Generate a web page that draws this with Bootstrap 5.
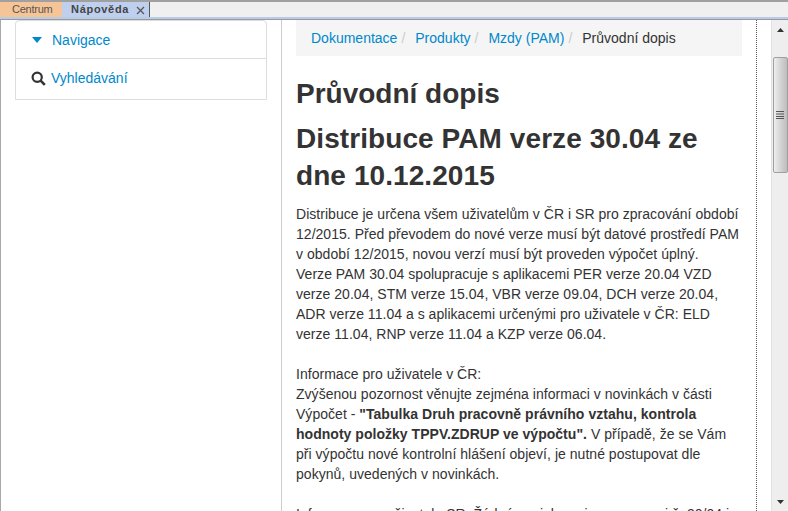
<!DOCTYPE html>
<html lang="cs">
<head>
<meta charset="UTF-8" />
<title>Nápověda</title>
<link href="https://cdn.jsdelivr.net/npm/bootstrap@5.3.0/dist/css/bootstrap.min.css" rel="stylesheet" />
<style>
  html, body { height: 511px; overflow: hidden; background: #fff; }
  body { font-family: "Liberation Sans", Arial, sans-serif; font-size: 14px; line-height: 20px; color: #333; }
  a { color: #0088cc; text-decoration: none; }

  .app-shell { height: 511px; display: flex; flex-direction: column; }
  .tabbar { height: 20px; flex: none; display: flex; align-items: stretch; background: #f0f0f0; border-top: 2px solid #a0a0a0; border-bottom: 1px solid #9a9a9a; box-shadow: inset 0 -2px 0 #b8cbe8; }
  .tab-item { height: 15px; font-size: 11px; line-height: 15px; color: #555; }
  .tab-center { width: 62px; background: #f6c597; padding-left: 12px; letter-spacing: -.25px; }
  .tab-help { width: 88px; background: #bfd0ef; font-weight: 700; letter-spacing: .7px; padding-left: 9px; color: #444; display: flex; justify-content: space-between; border-right: 1px solid #555; }
  .tab-close { width: 9px; height: 9px; margin: 4px 4px 0 0; }

  .work-area { flex: 1; display: flex; min-height: 0; border-left: 1px solid #a8a8a8; }
  .side-col { width: 281px; flex: none; padding: 0 14px; border-right: 1px solid #ccc; }
  .side-box { width: 252px; border: 1px solid #ddd; border-radius: 4px 4px 0 0; }
  .side-box .list-group-item { border: 0; background: none; padding: 0; height: 37px; display: flex; align-items: center; color: #0088cc; font-size: 14px; }
  .side-box .list-group-item + .list-group-item { border-top: 1px solid #ddd; height: 41px; padding-left: 15px; padding-bottom: 2px; }
  .side-box .list-group-item:first-child { padding-left: 16px; padding-top: 1px; }
  .nav-caret { width: 10px; height: 6px; margin-right: 10px; }
  .find-icon { width: 15px; height: 15px; margin-right: 5px; }

  .main-col { width: 475px; flex: none; padding: 0 14px; border-right: 1px dotted #555; overflow: hidden; }
  .crumbs { height: 36px; margin: 0 0 22px; padding: 0 15px; background: #f5f5f5; align-items: center; font-size: 14px; }
  .crumbs .breadcrumb-item + .breadcrumb-item { padding-left: 4px; }
  .crumbs .breadcrumb-item + .breadcrumb-item::before { color: #ccc; padding-right: 10px; }
  .crumbs .breadcrumb-item.active { color: #333; }
  .doc-title { font-size: 28px; line-height: 31px; font-weight: 700; color: #333; margin: 0 0 11px; }
  .doc-sub { margin-bottom: 10px; line-height: 37px; letter-spacing: .08px; }
  .doc-text { margin: 0 0 20px; width: 445px; font-size: 14px; letter-spacing: .03px; }

  .scroll-col { flex: 1; display: flex; flex-direction: column; align-items: center; background: #eeeeee; border-left: 1px solid #e2e2e2; margin-left: 14px; }
  .scroll-arrow { height: 37px; flex: none; display: flex; justify-content: center; padding-top: 8px; }
  .scroll-thumb { width: 15px; height: 116px; flex: none; border: 1px solid #a0a0a0; border-radius: 2px; background: linear-gradient(to right, #eee, #d4d4d4 50%, #bdbdbd); display: flex; align-items: center; justify-content: center; }
  .scroll-fill { flex: 1; }
  .scroll-down { height: 22px; flex: none; display: flex; justify-content: center; padding-top: 11px; }
</style>
</head>
<body>
<div class="app-shell">
  <div class="tabbar">
    <div class="tab-item tab-center">Centrum</div>
    <div class="tab-item tab-help">
      <span>Nápověda</span>
      <svg class="tab-close" viewBox="0 0 9 9"><path d="M1 1l7 7M8 1L1 8" stroke="#555" stroke-width="1.2" fill="none"/></svg>
    </div>
  </div>
  <div class="work-area">
    <div class="side-col">
      <div class="list-group side-box">
        <a href="#" class="list-group-item">
          <svg class="nav-caret" viewBox="0 0 10 6"><path d="M0 0h10L5 6z" fill="#0088cc"/></svg>Navigace
        </a>
        <a href="#" class="list-group-item">
          <svg class="find-icon" viewBox="0 0 15 15"><circle cx="6.2" cy="6.2" r="4.6" fill="none" stroke="#333" stroke-width="2.2"/><path d="M9.6 9.6l4.2 4.2" stroke="#333" stroke-width="2.6"/></svg>Vyhledávání
        </a>
      </div>
    </div>
    <div class="main-col">
      <ol class="breadcrumb crumbs">
        <li class="breadcrumb-item"><a href="#">Dokumentace</a></li>
        <li class="breadcrumb-item"><a href="#">Produkty</a></li>
        <li class="breadcrumb-item"><a href="#">Mzdy (PAM)</a></li>
        <li class="breadcrumb-item active">Průvodní dopis</li>
      </ol>
      <h1 class="doc-title">Průvodní dopis</h1>
      <h1 class="doc-title doc-sub">Distribuce PAM verze 30.04 ze dne 10.12.2015</h1>
      <p class="doc-text">Distribuce je určena všem uživatelům v ČR i SR pro zpracování období 12/2015. Před převodem do nové verze musí být datové prostředí PAM v období 12/2015, novou verzí musí být proveden výpočet úplný.<br>
      Verze PAM 30.04 spolupracuje s aplikacemi PER verze 20.04 VZD verze 20.04, STM verze 15.04, VBR verze 09.04, DCH verze 20.04, ADR verze 11.04 a s aplikacemi určenými pro uživatele v ČR: ELD verze 11.04, RNP verze 11.04 a KZP verze 06.04.</p>
      <p class="doc-text">Informace pro uživatele v ČR:<br>
      Zvýšenou pozornost věnujte zejména informaci v novinkách v části Výpočet - <b>"Tabulka Druh pracovně právního vztahu, kontrola hodnoty položky TPPV.ZDRUP ve výpočtu".</b> V případě, že se Vám při výpočtu nové kontrolní hlášení objeví, je nutné postupovat dle pokynů, uvedených v novinkách.</p>
      <p class="doc-text">Informace pro uživatele SR: Žádné novinky nejsou pro verzi č. 30/04 i</p>
    </div>
    <div class="scroll-col">
      <div class="scroll-arrow"><svg width="7" height="4" viewBox="0 0 7 4"><path d="M3.5 0L7 4H0z" fill="#333"/></svg></div>
      <div class="scroll-thumb"><svg width="8" height="8" viewBox="0 0 8 8"><path d="M0 .5h8M0 3h8M0 5.500h8M0 7.500h8" stroke="#555" stroke-width="1"/></svg></div>
      <div class="scroll-fill"></div>
      <div class="scroll-down"><svg width="7" height="4" viewBox="0 0 7 4"><path d="M0 0h7L3.500 4z" fill="#333"/></svg></div>
    </div>
  </div>
</div>
<script src="https://cdn.jsdelivr.net/npm/bootstrap@5.3.0/dist/js/bootstrap.bundle.min.js"></script>
</body>
</html>
